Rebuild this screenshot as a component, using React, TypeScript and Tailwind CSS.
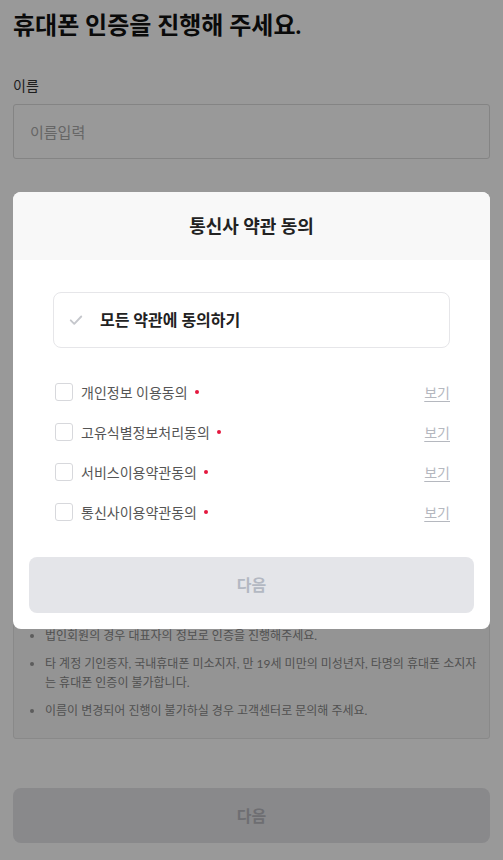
const TERMS = ['개인정보 이용동의', '고유식별정보처리동의', '서비스이용약관동의', '통신사이용약관동의'];

const NOTICES = [
  '법인회원의 경우 대표자의 정보로 인증을 진행해주세요.',
  '타 계정 기인증자, 국내휴대폰 미소지자, 만 19세 미만의 미성년자, 타명의 휴대폰 소지자는 휴대폰 인증이 불가합니다.',
  '이름이 변경되어 진행이 불가하실 경우 고객센터로 문의해 주세요.',
];

function CheckIcon() {
  return (
    <svg className="w-[14px] h-[14px]" viewBox="0 0 24 24" fill="none" stroke="currentColor" strokeWidth={3.2} strokeLinecap="round" strokeLinejoin="round">
      <path d="M3 12.5l6 6L21 6" />
    </svg>
  );
}

function TermsModal() {
  return (
    <div className="fixed inset-0 bg-black/40 flex justify-center items-start pt-[192px] px-[13px]">
      <div className="w-full bg-white rounded-[8px] overflow-hidden">
        <div className="h-[68px] bg-[#f8f8f8] flex items-center justify-center">
          <h2 className="text-[18px] font-bold text-[#222]">통신사 약관 동의</h2>
        </div>

        <div className="px-[40px] pt-[32px]">
          <button className="w-full h-[56px] border border-[#e6e6e9] rounded-[8px] flex items-center pl-[15px] gap-[17px] text-left">
            <span className="text-[#c5c7cc]">
              <CheckIcon />
            </span>
            <span className="text-[16px] font-bold text-[#222]">모든 약관에 동의하기</span>
          </button>

          <ul className="mt-[35px] flex flex-col gap-[22px] pl-[2px]">
            {TERMS.map((term) => (
              <li key={term} className="flex items-center h-[18px]">
                <span className="w-[18px] h-[18px] border border-[#d7d8dc] rounded-[3px] bg-white shrink-0" />
                <span className="ml-[8px] text-[14px] text-[#555]">{term}</span>
                <span className="ml-[7px] w-[4px] h-[4px] rounded-full bg-[#e4173e]" />
                <a className="ml-auto text-[14px] text-[#b5b8bf] underline underline-offset-[3px]">보기</a>
              </li>
            ))}
          </ul>
        </div>

        <div className="px-[16px] pt-[36px] pb-[16px]">
          <button className="w-full h-[56px] rounded-[8px] bg-[#e4e5e9] text-[#b3b8c2] text-[16px] font-bold">다음</button>
        </div>
      </div>
    </div>
  );
}

export default function App() {
  return (
    <div className="min-h-screen bg-white px-[13px] pt-[9px] pb-[17px]" style={{ fontFamily: 'Lato, "Noto Sans CJK KR", sans-serif' }}>
      <h1 className="text-[24px] leading-[32px] font-bold text-[#111]">휴대폰 인증을 진행해 주세요.</h1>

      <div className="mt-[35px]">
        <label className="block text-[14px] leading-[20px] text-[#333]">이름</label>
        <input
          className="mt-[8px] w-full h-[55px] border border-[#dcdcdc] rounded-[3px] px-[16px] text-[15px] placeholder-[#aaa] outline-none"
          placeholder="이름입력"
        />
      </div>

      <div className="mt-[448px] border border-[#e4e4e4] rounded-[3px] bg-[#f7f7f7] pl-[20px] pr-[8px] pt-[18px] pb-[18px]">
        <ul className="flex flex-col gap-[9px] list-disc pl-[11px] marker:text-[#999]">
          {NOTICES.map((n) => (
            <li key={n} className="text-[12px] leading-[19px] text-[#888]">{n}</li>
          ))}
        </ul>
      </div>

      <button className="mt-[49px] w-full h-[55px] rounded-[8px] bg-[#e5e5e8] text-[#b7b8be] text-[16px] font-bold">다음</button>

      <TermsModal />
    </div>
  );
}
